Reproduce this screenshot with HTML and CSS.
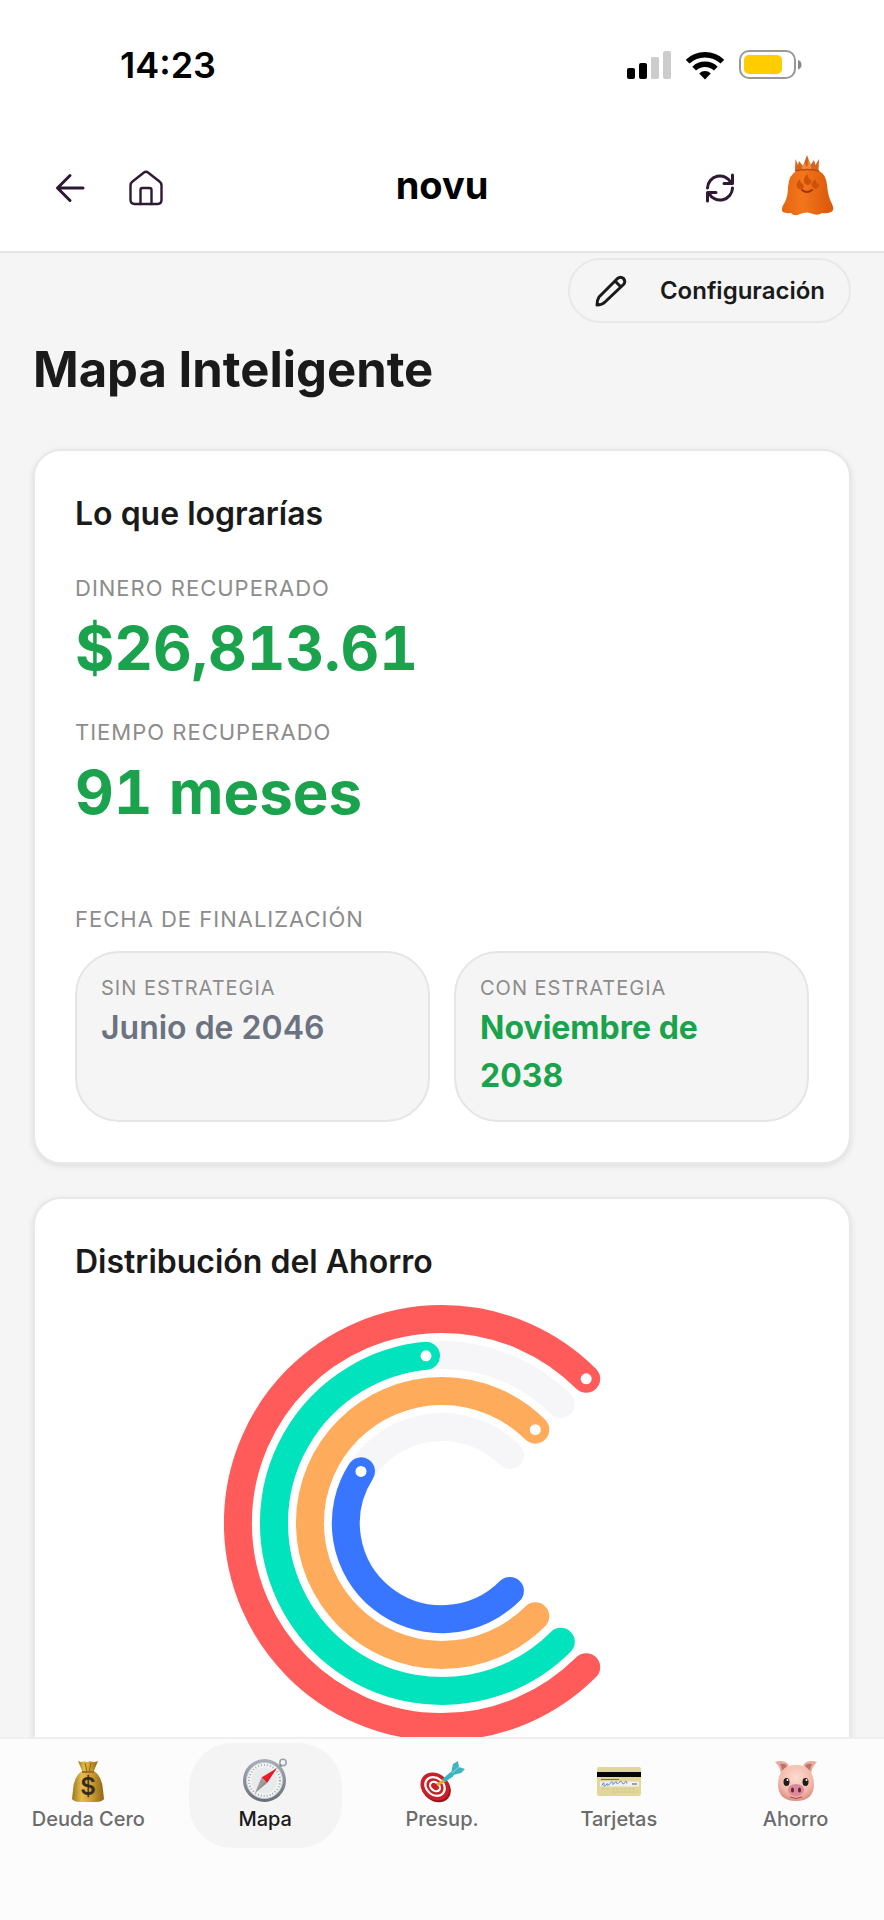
FILE: index.html
```html
<!DOCTYPE html>
<html lang="es">
<head>
    <meta charset="UTF-8">
    <meta name="viewport" content="width=device-width, initial-scale=1.0">
    <title>Mapa Inteligente</title>
    <link rel="stylesheet" href="styles.css">
</head>
<body>

    <header class="top">
        <div class="status-bar">
            <span class="time">14:23</span>
            <div class="status-icons">
                <svg width="44" height="28" viewBox="0 0 44 28">
                    <rect x="0" y="17" width="8" height="11" rx="2"/>
                    <rect x="12" y="12" width="8" height="16" rx="2"/>
                    <rect x="24" y="6" width="8" height="22" rx="2" fill="#ccc"/>
                    <rect x="36" y="0" width="8" height="28" rx="2" fill="#ccc"/>
                </svg>
                <svg width="40" height="29" viewBox="0 0 40 29">
                    <g fill="none" stroke="#000" stroke-width="5.4">
                        <path d="M2.6 10.6a25.5 25.5 0 0 1 34.8 0"/>
                        <path d="M9.2 17.6a15.7 15.7 0 0 1 21.6 0"/>
                    </g>
                    <path d="M20 28.4l-5.8-6a8.3 8.3 0 0 1 11.6 0z"/>
                </svg>
                <svg width="63" height="30" viewBox="0 0 63 30">
                    <rect x="1" y="1" width="55" height="27" rx="9" fill="#fff" stroke="#999" stroke-width="2"/>
                    <rect x="5" y="5" width="38" height="19" rx="5" fill="#fc0"/>
                    <path d="M59 10q3.5 1.2 3.5 4.8t-3.5 4.8z" fill="#888"/>
                </svg>
            </div>
        </div>

        <div class="header">
            <div class="header-side">
                <button class="icon-btn" aria-label="Volver">
                    <svg width="40" height="40" viewBox="0 0 40 40">
                        <path d="M33 20H7.5M20 7.5L7.5 20L20 32.5"/>
                    </svg>
                </button>
                <button class="icon-btn home" aria-label="Inicio">
                    <svg width="40" height="40" viewBox="0 0 40 40">
                        <path d="M4.5 17.5q0-2.5 2-4L18 4.5q2-1.5 4 0l11.5 9q2 1.5 2 4V32q0 4-4 4h-23q-4 0-4-4z"/>
                        <path d="M14.5 36V22q0-2 2-2h7q2 0 2 2v14"/>
                    </svg>
                </button>
            </div>
            <a class="logo" href="#">novu</a>
            <div class="header-side right">
                <button class="icon-btn" aria-label="Actualizar">
                    <svg width="40" height="40" viewBox="0 0 40 40">
                        <path d="M7.5 20A12.5 12.5 0 0 1 31 14.5M32.5 7v8.5H24"/>
                        <path d="M32.5 20A12.5 12.5 0 0 1 9 25.5M7.5 33v-8.5H16"/>
                    </svg>
                </button>
                <button class="avatar" aria-label="Perfil">
                    <svg width="54" height="62" viewBox="0 0 54 62">
                        <defs>
                            <linearGradient id="ghost" x1="0" x2="1">
                                <stop offset="0" stop-color="#e3650f"/>
                                <stop offset=".4" stop-color="#f3751b"/>
                                <stop offset="1" stop-color="#d9570a"/>
                            </linearGradient>
                        </defs>
                        <path d="M15 17L15.5 5l2.5 6 1-4 4 5L27 1l3.5 10L34 6l1.500 5L39 5 38.500 17z" fill="#d8631d"/>
                        <path d="M22 15q0-4 3-6 0 3 2 4 2-3 1-7 4 4 3 9z" fill="#ef8b45"/>
                        <path d="M15 17q12-3 24 0 7 3 8 14 1 12 5 19 3 6-1 8-4 2-9 1-4 3-9 1-6-3-13 0-6 3-9-1-10 1-9-4 0-3 3-7 3-6 3-15 1-13 9-16z" fill="url(#ghost)"/>
                        <path d="M15 17q12-3 24 0" fill="none" stroke="#b94a08" stroke-width="1.5"/>
                        <g fill="#cf520c">
                            <path d="M17 33q-1-5 3-8 0 4 3 5 2 4-1 5-4 1-5-2z"/>
                            <path d="M24 28q-1-5 4-8-1 4 3 6 1 4-3 5-3 0-4-3z"/>
                            <path d="M32 32q-1-4 4-7-1 4 3 5 0 4-3 5-3 0-4-3z"/>
                        </g>
                        <path d="M22 36q5 4 10 0" fill="none" stroke="#9e3205" stroke-width="2" stroke-linecap="round"/>
                    </svg>
                </button>
            </div>
        </div>
    </header>

    <main class="content">
        <button class="config-btn">
            <svg width="34" height="34" viewBox="0 0 34 34">
                <path d="M3 31q0-5 2-8L23.5 4.5q3-2.5 6 0 2.5 3 0 6L11 28q-3 3-8 3z"/>
                <path d="M21 7l6 6"/>
            </svg>
            Configuración
        </button>

        <h1>Mapa Inteligente</h1>

        <section class="card">
            <h2>Lo que lograrías</h2>
            <div class="stat">
                <div class="label">DINERO RECUPERADO</div>
                <div class="value">$26,813.61</div>
            </div>
            <div class="stat">
                <div class="label">TIEMPO RECUPERADO</div>
                <div class="value">91 meses</div>
            </div>
            <div class="dates">
                <div class="label">FECHA DE FINALIZACIÓN</div>
                <div class="date-grid">
                    <div class="date-box">
                        <div class="date-label">SIN ESTRATEGIA</div>
                        <div class="date-value">Junio de 2046</div>
                    </div>
                    <div class="date-box">
                        <div class="date-label">CON ESTRATEGIA</div>
                        <div class="date-value green">Noviembre de 2038</div>
                    </div>
                </div>
            </div>
        </section>

        <section class="card">
            <h2>Distribución del Ahorro</h2>
            <svg class="chart" width="436" height="436" viewBox="-218 -218 436 436">
                <!-- tracks -->
                <g stroke="#f6f6f9">
                    <path d="M118.8 118.8A168 168 0 1 1 118.8 -118.8"/>
                    <path d="M67.9 67.9A96 96 0 1 1 67.9 -67.9"/>
                </g>
                <!-- savings -->
                <path stroke="#ff5b5b" d="M144.2 144.2A204 204 0 1 1 144.2 -144.2"/>
                <path stroke="#00e3bc" d="M118.8 118.8A168 168 0 1 1 -16 -167.2"/>
                <path stroke="#ffab5c" d="M93.3 93.3A132 132 0 1 1 93.3 -93.3"/>
                <path stroke="#3976ff" d="M67.9 67.9A96 96 0 0 1 -81 -51.6"/>
                <g class="dots">
                    <circle cx="144.2" cy="-144.2" r="5.5"/>
                    <circle cx="-16" cy="-167.2" r="5.5"/>
                    <circle cx="93.3" cy="-93.3" r="5.5"/>
                    <circle cx="-81" cy="-51.6" r="5.5"/>
                </g>
            </svg>
        </section>
    </main>

    <nav class="tabs">
        <a class="tab" href="#">
            <svg width="48" height="48" viewBox="0 0 48 48">
                <defs>
                    <linearGradient id="bag" x1="0" x2="1">
                        <stop offset="0" stop-color="#9d741b"/>
                        <stop offset=".3" stop-color="#e2bd4c"/>
                        <stop offset=".6" stop-color="#cf9f32"/>
                        <stop offset="1" stop-color="#8d6518"/>
                    </linearGradient>
                </defs>
                <path d="M14 4q4 2 6 0 3 2 6 0 4 2 8 0l-5 12H19z" fill="url(#bag)"/>
                <path d="M18 14h12q8 5 9 19l1 9q-2 3-8 3H16q-6 0-8-3l1-9q1-14 9-19z" fill="url(#bag)"/>
                <path d="M21 6l2 9M27 6l-2 9" stroke="#8d6518" fill="none"/>
                <path d="M18 15h12" stroke="#a66b24" stroke-width="2"/>
                <text class="dollar" x="24" y="38">$</text>
            </svg>
            Deuda Cero
        </a>
        <a class="tab active" href="#">
            <svg width="48" height="48" viewBox="0 0 48 48">
                <defs>
                    <linearGradient id="rim" x1="0" x2="0" y1="0" y2="1">
                        <stop offset="0" stop-color="#a9b0ba"/>
                        <stop offset="1" stop-color="#666e7a"/>
                    </linearGradient>
                </defs>
                <circle cx="42" cy="5.5" r="3.2" fill="none" stroke="#98a2ae" stroke-width="1.5"/>
                <path d="M36 10l3-3 2 2-3 3z" fill="#7c8590"/>
                <circle cx="23.5" cy="23.5" r="21.5" fill="url(#rim)"/>
                <circle cx="23.5" cy="23.5" r="18" fill="#f4f4f4" stroke="#c5cad1"/>
                <circle cx="23.5" cy="23.5" r="15.5" fill="none" stroke="#a5a8ac" stroke-width="2" stroke-dasharray="1 2"/>
                <circle cx="23.5" cy="23.5" r="13" fill="#e9eaeb"/>
                <path d="M36 11L20.5 20.5l5.5 5.5z" fill="#ee1c27"/>
                <path d="M14 36l6.5-15.5L26 26z" fill="#9b9da1"/>
                <path d="M14 36L36 11 26 26z" fill="#000" opacity=".1"/>
            </svg>
            Mapa
        </a>
        <a class="tab" href="#">
            <svg width="48" height="48" viewBox="0 0 48 48">
                <ellipse cx="18" cy="31" rx="16" ry="13" fill="#97131a" transform="rotate(40 18 31)"/>
                <ellipse cx="17" cy="29.5" rx="15.5" ry="13" fill="#c91f28" transform="rotate(40 17 29.5)"/>
                <g fill="none" stroke="#fff" stroke-width="2.2" transform="rotate(40 17 29.5)">
                    <ellipse cx="17" cy="29.5" rx="10.5" ry="8.5"/>
                    <ellipse cx="17" cy="29.5" rx="5.5" ry="4"/>
                </g>
                <path d="M19 28l8-5" stroke="#e9a927" stroke-width="3"/>
                <path d="M24 22.5l8-7 6-2-3 6-8 5.5z" fill="#35b5c4"/>
                <path d="M33 16l2-9 5-3 1 6 6 2-4 4-8 2z" fill="#3fb3c0"/>
                <path d="M34 16l7-6" stroke="#8fdae0"/>
            </svg>
            Presup.
        </a>
        <a class="tab" href="#">
            <svg width="48" height="48" viewBox="0 0 48 48">
                <rect x="2" y="10" width="44" height="29" rx="2" fill="#e1d79b"/>
                <rect x="2" y="15" width="44" height="5" fill="#050505"/>
                <path d="M6 22.5h18" stroke="#777052"/>
                <rect x="5" y="24.5" width="39" height="5" fill="#f0f1ee"/>
                <path d="M7 28.5q2-5 2-1t3-1q0 4 3 0t3 1l3-3q1 4 3 1t3 0 3 0q1-3 2 1" fill="none" stroke="#5a84bf"/>
                <path d="M37 27h5" stroke="#555"/>
                <path d="M7 32h7M17 32h24M17 35h26" stroke="#d0c68a" stroke-dasharray="3 1"/>
            </svg>
            Tarjetas
        </a>
        <a class="tab" href="#">
            <svg width="48" height="48" viewBox="0 0 48 48">
                <defs>
                    <radialGradient id="pig" cx=".5" cy=".35" r=".65">
                        <stop offset="0" stop-color="#fcdcd0"/>
                        <stop offset=".7" stop-color="#f3b8a9"/>
                        <stop offset="1" stop-color="#db9082"/>
                    </radialGradient>
                </defs>
                <path d="M3 5q9-3 14 3l-8 9q-1-8-6-12zM45 5q-9-3-14 3l8 9q1-8 6-12z" fill="#e8aa9a"/>
                <path d="M8 7q5-1 7 2l-5 5q0-4-2-7zM40 7q-5-1-7 2l5 5q0-4 2-7z" fill="#b8746a"/>
                <path d="M24 8q17 0 18 19 0 17-18 17T6 27Q7 8 24 8z" fill="url(#pig)"/>
                <ellipse cx="14.5" cy="25" rx="3" ry="4" fill="#241b1c"/>
                <ellipse cx="33.5" cy="25" rx="3" ry="4" fill="#241b1c"/>
                <circle cx="15.5" cy="23" r="1" fill="#fff"/>
                <circle cx="34.5" cy="23" r="1" fill="#fff"/>
                <ellipse cx="24" cy="33" rx="8" ry="6" fill="#db879c"/>
                <ellipse cx="20.5" cy="33" rx="1.5" ry="2.5" fill="#642635"/>
                <ellipse cx="27.5" cy="33" rx="1.5" ry="2.5" fill="#642635"/>
                <path d="M18 40q6 3 12 0" fill="none" stroke="#9c5148"/>
            </svg>
            Ahorro
        </a>
    </nav>

</body>
</html>
```
FILE: styles.css
```css
* {
    box-sizing: border-box;
}

body {
    margin: 0;
    font-family: Inter, "Liberation Sans", sans-serif;
    background-color: #f5f5f5;
    color: #1a1a1a;
}

button {
    font-family: inherit;
    color: inherit;
    background: none;
    border: none;
    padding: 0;
    cursor: pointer;
}

svg {
    display: block;
    flex-shrink: 0;
}

/* Status bar and header */
.top {
    background-color: #fff;
    border-bottom: 2px solid #e5e5e5;
}

.status-bar {
    display: flex;
    justify-content: space-between;
    align-items: center;
    height: 130px;
    padding: 0 82px 0 120px;
    color: #000;
}

.time {
    font-size: 36px;
    font-weight: 600;
}

.status-icons {
    display: flex;
    align-items: center;
    gap: 14px;
}

.header {
    display: grid;
    grid-template-columns: 1fr auto 1fr;
    align-items: center;
    height: 121px;
    padding: 0 50px 6px;
}

.header-side {
    display: flex;
    align-items: center;
    gap: 36px;
}

.right {
    justify-content: flex-end;
    gap: 40px;
}

.icon-btn svg {
    fill: none;
    stroke: #2f1833;
    stroke-width: 3;
    stroke-linecap: round;
    stroke-linejoin: round;
}

.home svg {
    stroke-width: 2.4;
}

.avatar {
    padding-bottom: 6px;
}

.logo {
    padding-bottom: 6px;
    color: #000;
    font-size: 38px;
    font-weight: 700;
    text-decoration: none;
}

.content {
    display: flex;
    flex-direction: column;
    padding: 5px 33px 100px;
}

.config-btn {
    display: flex;
    align-items: center;
    align-self: flex-end;
    gap: 32px;
    height: 65px;
    padding: 0 24px;
    border: 2px solid #e8e8e8;
    border-radius: 33px;
    font-size: 24px;
    font-weight: 600;
}

.config-btn svg {
    fill: none;
    stroke: #1a1a1a;
    stroke-width: 3;
    stroke-linejoin: round;
}

h1 {
    margin: 17px 0 49px;
    font-size: 49px;
    line-height: 60px;
    font-weight: 700;
}

h2 {
    margin: 0 0 35px;
    font-size: 32px;
    line-height: 46px;
    font-weight: 600;
}

/* Cards */
.card {
    margin-bottom: 33px;
    padding: 40px;
    background-color: #fff;
    border: 2px solid #e8e8e8;
    border-radius: 28px;
    box-shadow: 0 2px 6px rgba(0, 0, 0, 0.1);
}

.stat {
    margin-bottom: 32px;
}

.label {
    color: #8c8c8c;
    font-size: 22px;
    line-height: 32px;
    letter-spacing: 1px;
}

.value {
    margin-top: 8px;
    color: #1aa34c;
    font-size: 60px;
    line-height: 72px;
    font-weight: 700;
    font-variant-numeric: tabular-nums;
}

.dates {
    margin-top: 75px;
}

.date-grid {
    display: grid;
    grid-template-columns: 1fr 1fr;
    gap: 24px;
    margin-top: 16px;
}

.date-box {
    padding: 20px 24px;
    background-color: #f5f5f5;
    border: 2px solid #e5e5e5;
    border-radius: 44px;
}

.date-label {
    color: #8c8c8c;
    font-size: 20px;
    line-height: 31px;
    letter-spacing: 1px;
}

.date-value {
    color: #6b7280;
    font-size: 32px;
    line-height: 48px;
    font-weight: 600;
}

.green {
    color: #1aa34c;
    font-weight: 700;
}

.chart {
    margin: -15px auto 0;
    fill: none;
    stroke-width: 28px;
    stroke-linecap: round;
}

.dots {
    fill: #fff;
    stroke: none;
}

/* Bottom navigation */
.tabs {
    position: fixed;
    left: 0;
    right: 0;
    bottom: 0;
    display: grid;
    grid-template-columns: repeat(5, 1fr);
    padding: 4px 0 72px;
    background-color: #fcfcfc;
    border-top: 2px solid #efefef;
}

.tab {
    display: flex;
    flex-direction: column;
    align-items: center;
    margin: 0 12px;
    padding: 14px 0;
    border-radius: 44px;
    color: #6b6b6b;
    font-size: 20px;
    line-height: 29px;
    font-weight: 500;
    white-space: nowrap;
    text-decoration: none;
}

.active {
    background-color: #f4f4f4;
    color: #1a1a1a;
}

.dollar {
    font-size: 24px;
    font-weight: 600;
    text-anchor: middle;
    fill: #382d1d;
}
```
